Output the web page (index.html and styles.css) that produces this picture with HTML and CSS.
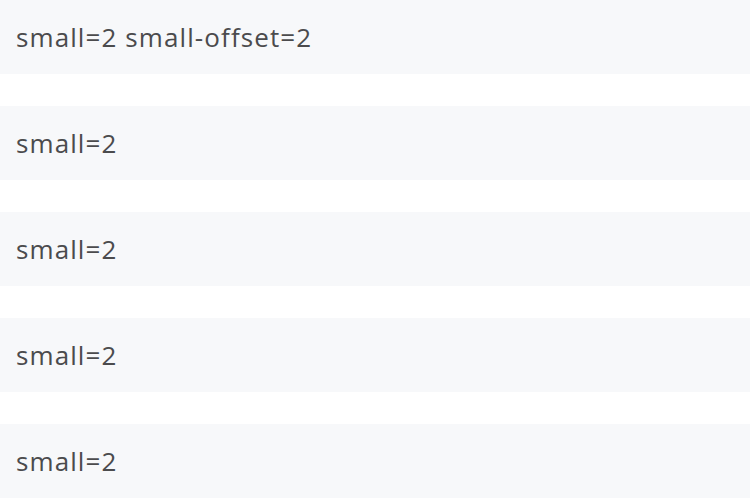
FILE: index.html
```html
<!DOCTYPE html>
<html>
<head>
<meta charset="utf-8">
<link rel="stylesheet" href="styles.css">
</head>
<body>
<div class="list">
  <div class="row">small=2 small-offset=2</div>
  <div class="row">small=2</div>
  <div class="row">small=2</div>
  <div class="row">small=2</div>
  <div class="row">small=2</div>
</div>
</body>
</html>
```

FILE: styles.css
```css
html, body {
  margin: 0;
  padding: 0;
  background: #ffffff;
}
.list {
  display: flex;
  flex-direction: column;
  gap: 32px;
}
.row {
  height: 74px;
  box-sizing: border-box;
  padding: 0 16px;
  display: flex;
  align-items: center;
  background: #f7f8fa;
  color: #4b4b4d;
  font-family: "Open Sans", "DejaVu Sans", sans-serif;
  font-size: 26px;
  letter-spacing: 1.1px;
}
```
